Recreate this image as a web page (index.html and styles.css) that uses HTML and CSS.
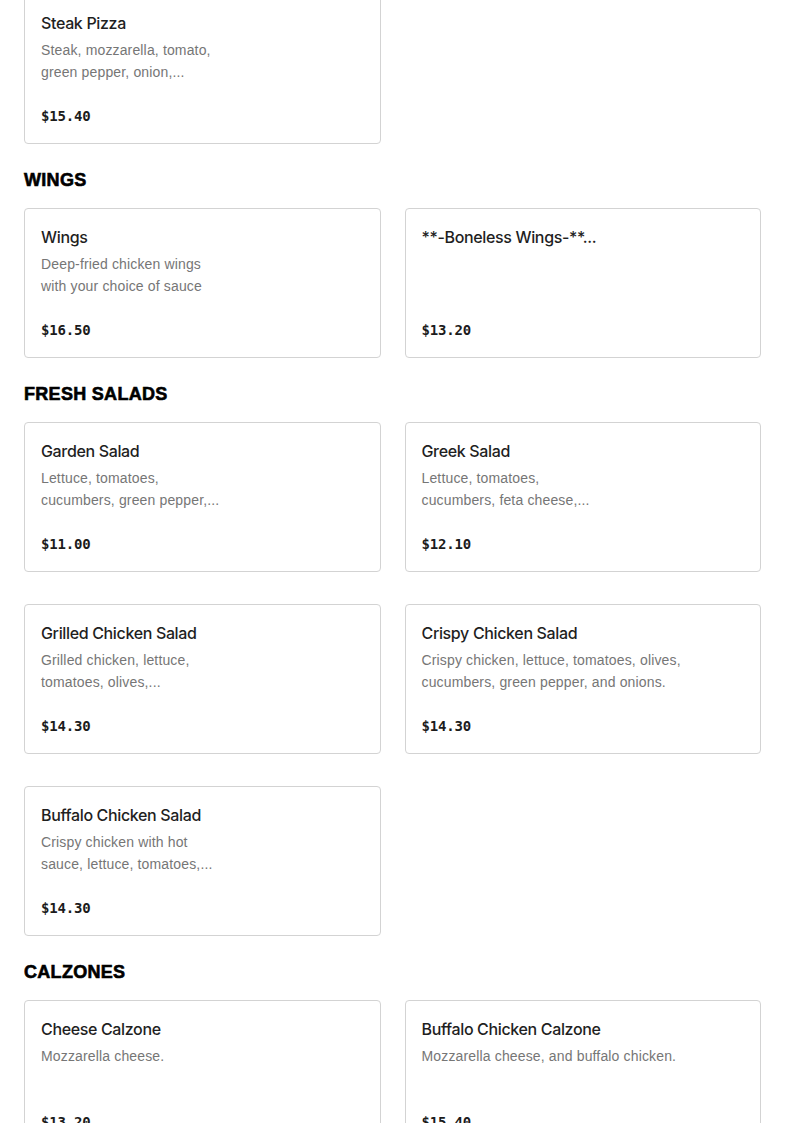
FILE: index.html
```html
<!DOCTYPE html>
<html lang="en">
<head>
<meta charset="utf-8">
<title>Menu</title>
<link rel="stylesheet" href="styles.css">
</head>
<body>
<main class="menu">
  <section class="section first">
    <div class="grid">
      <article class="card">
        <h3 class="item-name">Steak Pizza</h3>
        <p class="item-desc">Steak, mozzarella, tomato,<br>green pepper, onion,...</p>
        <p class="item-price">$15.40</p>
      </article>
    </div>
  </section>

  <section class="section">
    <h2 class="section-title">WINGS</h2>
    <div class="grid">
      <article class="card">
        <h3 class="item-name">Wings</h3>
        <p class="item-desc">Deep-fried chicken wings<br>with your choice of sauce</p>
        <p class="item-price">$16.50</p>
      </article>
      <article class="card">
        <h3 class="item-name">**-Boneless Wings-**...</h3>
        <p class="item-price">$13.20</p>
      </article>
    </div>
  </section>

  <section class="section">
    <h2 class="section-title">FRESH SALADS</h2>
    <div class="grid">
      <article class="card">
        <h3 class="item-name">Garden Salad</h3>
        <p class="item-desc">Lettuce, tomatoes,<br>cucumbers, green pepper,...</p>
        <p class="item-price">$11.00</p>
      </article>
      <article class="card">
        <h3 class="item-name">Greek Salad</h3>
        <p class="item-desc">Lettuce, tomatoes,<br>cucumbers, feta cheese,...</p>
        <p class="item-price">$12.10</p>
      </article>
      <article class="card">
        <h3 class="item-name">Grilled Chicken Salad</h3>
        <p class="item-desc">Grilled chicken, lettuce,<br>tomatoes, olives,...</p>
        <p class="item-price">$14.30</p>
      </article>
      <article class="card">
        <h3 class="item-name">Crispy Chicken Salad</h3>
        <p class="item-desc">Crispy chicken, lettuce, tomatoes, olives,<br>cucumbers, green pepper, and onions.</p>
        <p class="item-price">$14.30</p>
      </article>
      <article class="card">
        <h3 class="item-name">Buffalo Chicken Salad</h3>
        <p class="item-desc">Crispy chicken with hot<br>sauce, lettuce, tomatoes,...</p>
        <p class="item-price">$14.30</p>
      </article>
    </div>
  </section>

  <section class="section">
    <h2 class="section-title">CALZONES</h2>
    <div class="grid">
      <article class="card">
        <h3 class="item-name">Cheese Calzone</h3>
        <p class="item-desc">Mozzarella cheese.</p>
        <p class="item-price">$13.20</p>
      </article>
      <article class="card">
        <h3 class="item-name">Buffalo Chicken Calzone</h3>
        <p class="item-desc">Mozzarella cheese, and buffalo chicken.</p>
        <p class="item-price">$15.40</p>
      </article>
    </div>
  </section>
</main>
</body>
</html>
```

FILE: styles.css
```css
* {
  box-sizing: border-box;
}

html, body {
  margin: 0;
  padding: 0;
  background: #ffffff;
}

body {
  font-family: "Liberation Sans", Arial, sans-serif;
  color: #1c1c1c;
}

.menu {
  padding: 0 24px 40px;
  margin-top: -6px;
}

.section-title {
  margin: 24px 0 16px;
  font-family: "Liberation Sans", Arial, sans-serif;
  font-weight: 900;
  font-size: 18px;
  line-height: 24px;
  letter-spacing: 0.3px;
  color: #000;
  -webkit-text-stroke: 0.6px #000;
}

.grid {
  display: grid;
  grid-template-columns: 1fr 1fr;
  column-gap: 24px;
  row-gap: 32px;
}

.card {
  display: flex;
  flex-direction: column;
  height: 150px;
  padding: 16px;
  border: 1px solid #d3d3d3;
  border-radius: 4px;
  background: #fff;
}

.item-name {
  margin: 0;
  font-family: Inter, "Liberation Sans", sans-serif;
  font-weight: 500;
  font-size: 16px;
  line-height: 24px;
  color: #1f1f1f;
  letter-spacing: -0.35px;
}

.item-desc {
  margin: 4px 0 0;
  font-size: 14px;
  line-height: 22px;
  color: #767676;
  letter-spacing: 0.15px;
}

.item-price {
  margin: auto 0 0;
  font-family: "DejaVu Sans Mono", "Liberation Mono", monospace;
  font-weight: bold;
  font-size: 14px;
  line-height: 18px;
  padding-bottom: 2px;
  color: #1c1c1c;
  letter-spacing: -0.2px;
}
```
